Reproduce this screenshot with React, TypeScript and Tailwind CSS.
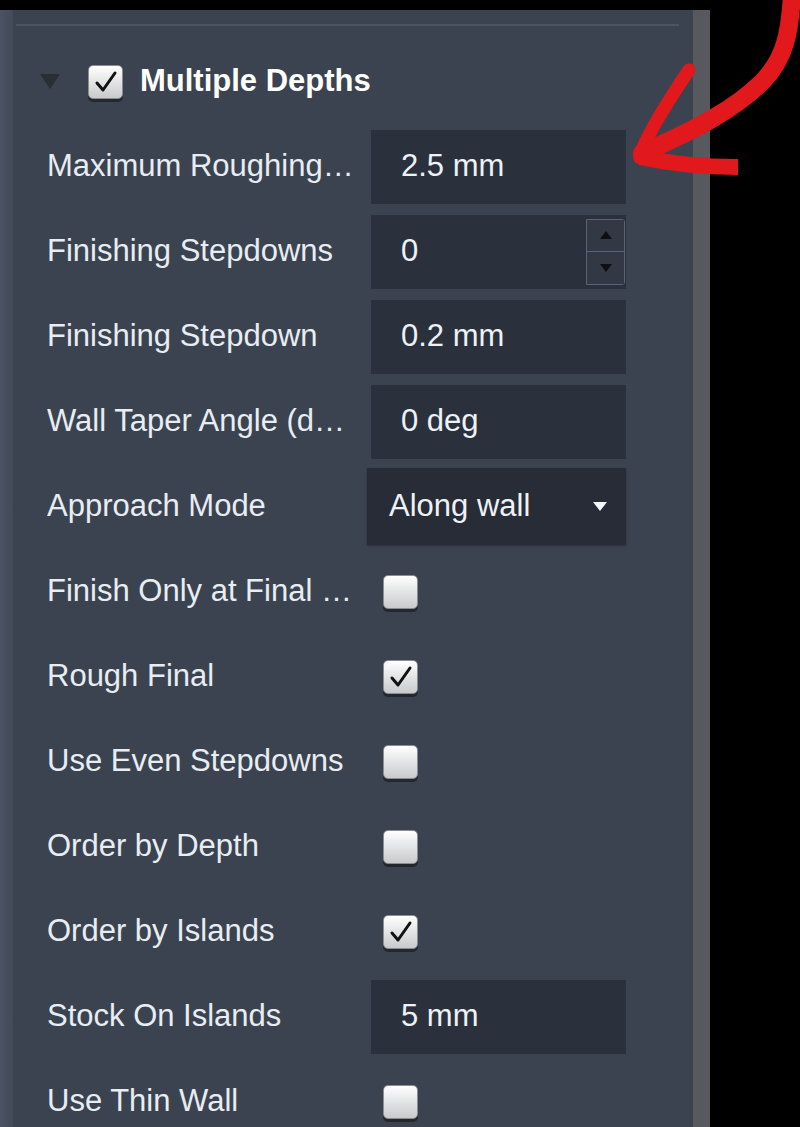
import React from 'react';

type Row =
  | { kind: 'input'; label: string; value: string; spinner?: boolean }
  | { kind: 'select'; label: string; value: string }
  | { kind: 'check'; label: string; checked: boolean };

const rows: Row[] = [
  { kind: 'input', label: 'Maximum Roughing Stepdown', value: '2.5 mm' },
  { kind: 'input', label: 'Finishing Stepdowns', value: '0', spinner: true },
  { kind: 'input', label: 'Finishing Stepdown', value: '0.2 mm' },
  { kind: 'input', label: 'Wall Taper Angle (deg)', value: '0 deg' },
  { kind: 'select', label: 'Approach Mode', value: 'Along wall' },
  { kind: 'check', label: 'Finish Only at Final Depth', checked: false },
  { kind: 'check', label: 'Rough Final', checked: true },
  { kind: 'check', label: 'Use Even Stepdowns', checked: false },
  { kind: 'check', label: 'Order by Depth', checked: false },
  { kind: 'check', label: 'Order by Islands', checked: true },
  { kind: 'input', label: 'Stock On Islands', value: '5 mm' },
  { kind: 'check', label: 'Use Thin Wall', checked: false },
];

function CheckBox({ checked }: { checked: boolean }) {
  return (
    <div className="w-[35px] h-[34px] rounded-[5px] border border-[#8a8d93] bg-gradient-to-b from-[#ffffff] to-[#c9cacc] shadow-[0_3px_0_#23272e] flex items-center justify-center">
      {checked && (
        <svg width="26" height="26" viewBox="0 0 26 26">
          <path d="M4 14 L10 21 L22 4" fill="none" stroke="#111" strokeWidth="3" strokeLinecap="round" strokeLinejoin="round" />
        </svg>
      )}
    </div>
  );
}

export default function App() {
  return (
    <div className="relative w-[800px] h-[1127px] bg-black overflow-hidden font-['Liberation_Sans',Arial,sans-serif]">
      <div className="flex h-full pt-[10px]">
        {/* left edge */}
        <div className="w-[13px] bg-gradient-to-r from-[#4b5364] to-[#434b5a]" />

        {/* panel */}
        <div className="w-[680px] bg-[#3b4350]">
          <div className="mt-[14px] ml-[3px] mr-[14px] h-[2px] bg-[#4c5462]" />

          <div className="pt-[13px]">
            {/* header */}
            <div className="h-[85px] flex items-center">
              <svg width="20" height="16" viewBox="0 0 20 16" className="ml-[27px]">
                <path d="M0 0 H20 L10 15 Z" fill="#2a2e35" />
              </svg>
              <div className="ml-[28px]">
                <CheckBox checked />
              </div>
              <span className="ml-[17px] text-[31px] font-bold text-white">Multiple Depths</span>
            </div>

            {rows.map((row) => (
              <div key={row.label} className="h-[85px] flex items-center">
                <div className="ml-[34px] w-[310px] truncate text-[31px] text-[#e8edf3]">{row.label}</div>
                {row.kind === 'input' && (
                  <div className="ml-[14px] w-[255px] h-[74px] bg-[#2b313c] flex items-center relative">
                    <span className="ml-[30px] text-[31px] text-[#eef2f7]">{row.value}</span>
                    {row.spinner && (
                      <div className="absolute right-[1px] top-[4px] bottom-[4px] w-[39px] border border-[#5b6271] rounded-r-[3px] flex flex-col">
                        <div className="flex-1 flex items-center justify-center border-b border-[#5b6271] bg-[#323844]">
                          <svg width="12" height="8" viewBox="0 0 12 8"><path d="M0 8 L6 0 L12 8 Z" fill="#0d0f12" /></svg>
                        </div>
                        <div className="flex-1 flex items-center justify-center bg-[#323844]">
                          <svg width="12" height="8" viewBox="0 0 12 8"><path d="M0 0 L12 0 L6 8 Z" fill="#0d0f12" /></svg>
                        </div>
                      </div>
                    )}
                  </div>
                )}
                {row.kind === 'select' && (
                  <div className="ml-[10px] w-[259px] h-[77px] bg-[#272c36] flex items-center justify-between shadow-[0_1px_2px_rgba(0,0,0,0.3)]">
                    <span className="ml-[22px] text-[31px] text-[#eef2f7]">{row.value}</span>
                    <svg width="14" height="9" viewBox="0 0 14 9" className="mr-[19px]">
                      <path d="M0 0 H14 L7 9 Z" fill="#f5f7fa" />
                    </svg>
                  </div>
                )}
                {row.kind === 'check' && (
                  <div className="ml-[26px]">
                    <CheckBox checked={row.checked} />
                  </div>
                )}
              </div>
            ))}
          </div>
        </div>

        {/* right edge */}
        <div className="w-[17px] bg-[#57595f]" />
      </div>

      {/* red annotation arrow */}
      <svg className="absolute inset-0 pointer-events-none" width="800" height="1127" viewBox="0 0 800 1127">
        <path d="M792 -6 C790 30, 786 58, 762 82 C735 108, 700 128, 642 153" fill="none" stroke="#e1191c" strokeWidth="18" strokeLinecap="round" />
        <path d="M689 70 C672 95, 652 125, 640 154" fill="none" stroke="#e1191c" strokeWidth="13" strokeLinecap="round" />
        <path d="M640 157 C672 164, 705 167, 738 167" fill="none" stroke="#e1191c" strokeWidth="16" strokeLinecap="butt" />
        <path d="M640 157 C660 161, 680 164, 700 165" fill="none" stroke="#e1191c" strokeWidth="14" strokeLinecap="round" />
      </svg>
    </div>
  );
}
